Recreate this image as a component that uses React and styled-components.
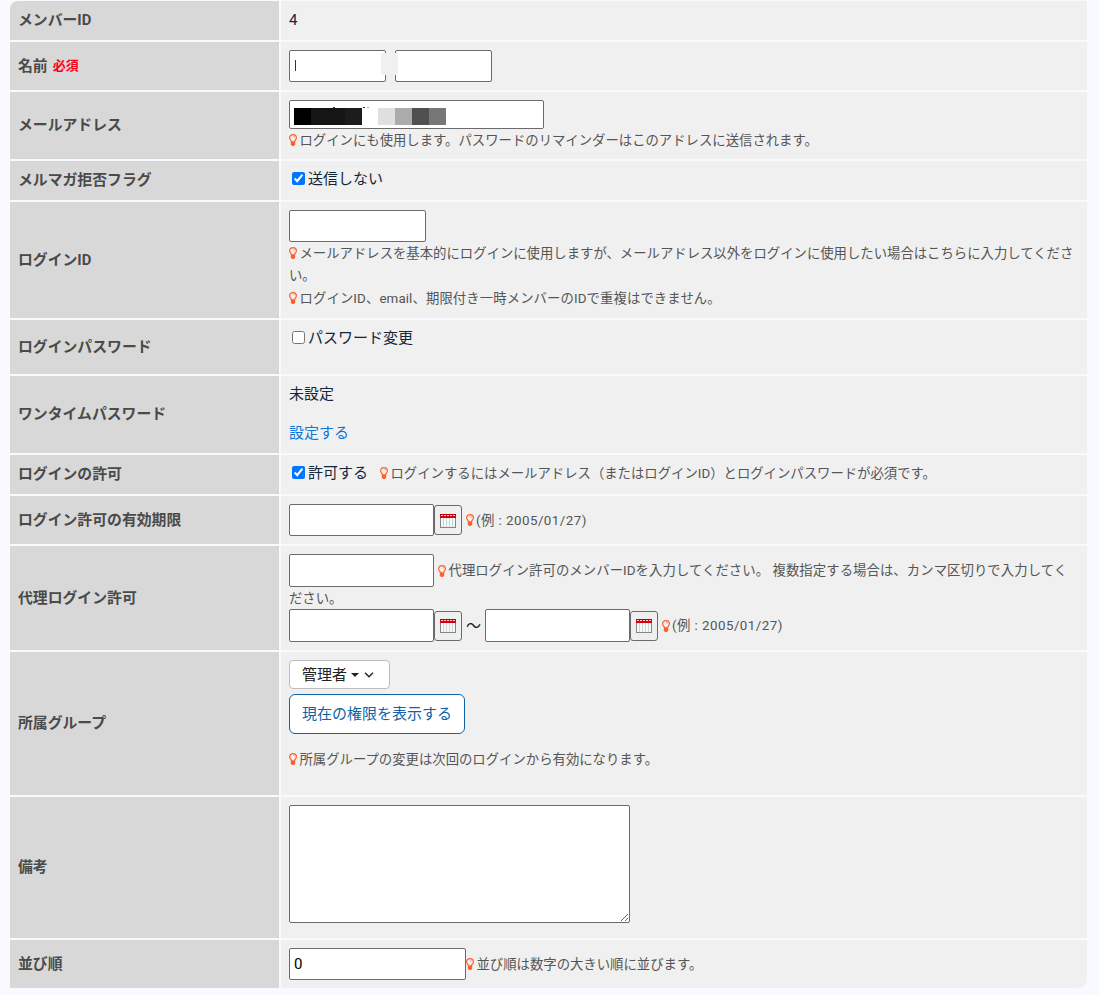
import React from "react";
import styled, { createGlobalStyle } from "styled-components";

const GlobalStyle = createGlobalStyle`
  * {
    box-sizing: border-box;
  }
  body {
    margin: 0;
    background: #f9faff;
    color: #14263a;
    font-family: Roboto, "Noto Sans CJK JP", sans-serif;
    font-size: 15px;
    overflow: hidden;
  }
`;

const Form = styled.form`
  display: flex;
  flex-direction: column;
  gap: 2px;
  width: 1077px;
  margin: 1px 0 0 10px;
  border-radius: 8px 0 8px 0;
  overflow: hidden;
`;

const RowBox = styled.div`
  display: grid;
  grid-template-columns: 269px 806px;
  gap: 2px;
  height: ${(p) => p.$height}px;
`;

const Label = styled.div`
  display: flex;
  align-items: center;
  padding: 0 8px 4px;
  background: #d8d8d8;
  color: #4a4a4a;
  font-size: 14.85px;
  font-weight: 700;
`;

const Required = styled.span`
  margin-left: 5px;
  color: #ff0019;
  font-size: 13px;
`;

const Value = styled.div`
  padding: 8px 8px 0;
  background: #f0f0f0;
`;

const Line = styled.div`
  position: relative;
  display: flex;
  align-items: center;
  height: ${(p) => p.$height || 20}px;
  margin-top: ${(p) => p.$top || 0}px;
  white-space: nowrap;
`;

const Text = styled.span`
  padding-bottom: 3px;
`;

const Input = styled.input`
  width: ${(p) => p.$width}px;
  height: ${(p) => p.$height || 32}px;
  margin: 0;
  padding: 0 4px;
  border: 1px solid #6b6b6b;
  border-radius: 2px;
  background: #fff;
  color: #000;
  font-family: inherit;
  font-size: 15px;
`;

const NameInput = styled(Input)`
  margin-right: 9px;
`;

const Caret = styled.span`
  position: absolute;
  left: 6px;
  top: 10px;
  width: 1px;
  height: 11px;
  background: #333;
`;

const Cover = styled.span`
  position: absolute;
  left: 92px;
  top: 3px;
  width: 17px;
  height: 22px;
  background: #f0f0f0;
`;

const Mosaic = styled.span`
  position: absolute;
  left: 5px;
  top: 8px;
  display: flex;
`;

const Tile = styled.span`
  width: 16.9px;
  height: 17px;
  background: ${(p) => p.$color};
`;

const Speck = styled.span`
  position: absolute;
  top: 7px;
  left: ${(p) => p.$left}px;
  width: 2px;
  height: 1px;
  background: ${(p) => p.$color || "#333"};
`;

const Check = styled.input`
  width: 13px;
  height: 13px;
  margin: 0 3px 2px;
`;

const NoteText = styled.span`
  display: inline-flex;
  align-items: center;
  margin-left: ${(p) => p.$left || 0}px;
  padding-bottom: 2px;
  color: #555;
  font-size: 13.36px;
  letter-spacing: ${(p) => p.$spacing || 0}px;
  white-space: pre;

  svg {
    flex: none;
    margin: 2px ${(p) => p.$gap ?? 2.5}px 0 0;
  }
`;

const Link = styled.a`
  padding-bottom: 3px;
  color: #0c78dc;
  text-decoration: none;
`;

const CalendarButton = styled.button`
  display: flex;
  align-items: center;
  justify-content: center;
  width: 28px;
  height: 30px;
  padding: 1px 0 0;
  border: 1px solid #6b6b6b;
  border-radius: 3px;
  background: #efefef;
`;

const Tilde = styled.span`
  width: 23px;
  padding-bottom: 3px;
  text-align: center;
`;

const GroupSelect = styled.button`
  display: flex;
  align-items: center;
  width: 101px;
  height: 29px;
  padding: 0 12px 2px;
  border: 1px solid #bdbdbd;
  border-radius: 4px;
  background: #fff;
  color: #222;
  font-family: inherit;
  font-size: 15px;

  svg {
    margin: 3px 0 0 4px;
  }
  svg + svg {
    margin-left: 5px;
  }
`;

const OutlineButton = styled.button`
  display: block;
  width: 176px;
  height: 40px;
  margin-top: 5px;
  padding: 0 0 4px;
  border: 1px solid #1062a6;
  border-radius: 6px;
  background: #fff;
  color: #1062a6;
  font-family: inherit;
  font-size: 15px;
  white-space: nowrap;
`;

const Memo = styled.textarea`
  display: block;
  width: 341px;
  height: 118px;
  border: 1px solid #6b6b6b;
  border-radius: 2px;
  background: #fff;
`;

const Bulb = () => (
  <svg width="8" height="12" viewBox="0 0 8 12" fill="none">
    <path
      d="M2.5 7.6C2.4 6.3.6 5.8.6 3.8a3.4 3.2 0 0 1 6.8 0c0 2-1.8 2.5-1.9 3.8"
      stroke="#ff5f2b"
      strokeWidth="1.2"
    />
    <path d="M4.3 2.2c.8 0 1.3.5 1.3 1.3" stroke="#ff5f2b" strokeWidth=".6" />
    <path d="M1.8 7.2h4.4v3.2L5 12H3l-1.2-1.6z" fill="#ff5f2b" />
  </svg>
);

const Calendar = () => (
  <svg width="16" height="14" viewBox="0 0 16 14" shapeRendering="crispEdges">
    <rect width="16" height="14" fill="#858585" />
    <rect width="16" height="4" fill="#d8000f" />
    <rect width="16" height="1" fill="#b0000c" />
    <path d="M1 1.5h14" stroke="#ffd5d5" strokeDasharray="2 1" />
    <rect x="1" y="4" width="14" height="9" fill="#f4fafa" />
    <path d="M3.5 4v9M6.5 4v9M9.5 4v9M12.5 4v9" stroke="#ccd4d4" />
  </svg>
);

const Note = ({ children, left, gap, spacing }) => (
  <NoteText $left={left} $gap={gap} $spacing={spacing}>
    <Bulb />
    {children}
  </NoteText>
);

const DateField = ({ height }) => (
  <>
    <Input $width={145} $height={height} type="text" />
    <CalendarButton type="button">
      <Calendar />
    </CalendarButton>
  </>
);

const DateExample = () => (
  <Note left={4} gap={2} spacing={0.45}>
    (例 : 2005/01/27)
  </Note>
);

const Row = ({ label, height, required, children }) => (
  <RowBox $height={height}>
    <Label>
      {label}
      {required && <Required>必須</Required>}
    </Label>
    <Value>{children}</Value>
  </RowBox>
);

const tiles = ["#000", "#151515", "#151515", "#1c1c1c", "#fff", "#dfdfdf", "#ababab", "#505050", "#777"];

const App = () => {
  return (
    <>
      <GlobalStyle />
      <Form>
        <Row label="メンバーID" height={39}>
          <Line $height={22}>4</Line>
        </Row>
        <Row label="名前" height={48} required>
          <Line $height={32}>
            <NameInput $width={97} />
            <NameInput $width={97} />
            <Caret />
            <Cover />
          </Line>
        </Row>
        <Row label="メールアドレス" height={67}>
          <Line $height={29}>
            <Input $width={255} $height={29} />
            <Mosaic>
              {tiles.map((color, i) => (
                <Tile key={i} $color={color} />
              ))}
            </Mosaic>
            <Speck $left={44} />
            <Speck $left={74} />
            <Speck $left={78} $color="#aaa" />
          </Line>
          <Line $height={22}>
            <Note>ログインにも使用します。パスワードのリマインダーはこのアドレスに送信されます。</Note>
          </Line>
        </Row>
        <Row label="メルマガ拒否フラグ" height={39}>
          <Line>
            <Check type="checkbox" defaultChecked />
            <Text>送信しない</Text>
          </Line>
        </Row>
        <Row label="ログインID" height={116}>
          <Line $height={32}>
            <Input $width={137} />
          </Line>
          <Line $height={22.5}>
            <Note>
              メールアドレスを基本的にログインに使用しますが、メールアドレス以外をログインに使用したい場合はこちらに入力してくださ
            </Note>
          </Line>
          <Line $height={22.5}>
            <NoteText>い。</NoteText>
          </Line>
          <Line $height={22.5}>
            <Note spacing={0.1}>ログインID、email、期限付き一時メンバーのIDで重複はできません。</Note>
          </Line>
        </Row>
        <Row label="ログインパスワード" height={54}>
          <Line>
            <Check type="checkbox" />
            <Text>パスワード変更</Text>
          </Line>
        </Row>
        <Row label="ワンタイムパスワード" height={77}>
          <Line>
            <Text>未設定</Text>
          </Line>
          <Line $top={19}>
            <Link>設定する</Link>
          </Line>
        </Row>
        <Row label="ログインの許可" height={39}>
          <Line>
            <Check type="checkbox" defaultChecked />
            <Text>許可する</Text>
            <Note left={12}>ログインするにはメールアドレス（またはログインID）とログインパスワードが必須です。</Note>
          </Line>
        </Row>
        <Row label="ログイン許可の有効期限" height={48}>
          <Line $height={32}>
            <DateField />
            <DateExample />
          </Line>
        </Row>
        <Row label="代理ログイン許可" height={104}>
          <Line $height={33}>
            <Input $width={145} $height={33} />
            <Note left={4} spacing={0.07}>
              代理ログイン許可のメンバーIDを入力してください。 複数指定する場合は、カンマ区切りで入力してく
            </Note>
          </Line>
          <Line $height={22}>
            <NoteText>ださい。</NoteText>
          </Line>
          <Line $height={33}>
            <DateField height={33} />
            <Tilde>～</Tilde>
            <DateField height={33} />
            <DateExample />
          </Line>
        </Row>
        <Row label="所属グループ" height={143}>
          <GroupSelect type="button">
            管理者
            <svg width="8" height="4" viewBox="0 0 8 4">
              <path d="M0 0h8L4 4z" fill="#222" />
            </svg>
            <svg width="10" height="6" viewBox="0 0 10 6" fill="none">
              <path d="M1 .8l4 4 4-4" stroke="#222" strokeWidth="1.4" />
            </svg>
          </GroupSelect>
          <OutlineButton type="button">現在の権限を表示する</OutlineButton>
          <Line $height={22} $top={14}>
            <Note>所属グループの変更は次回のログインから有効になります。</Note>
          </Line>
        </Row>
        <Row label="備考" height={141}>
          <Memo />
        </Row>
        <Row label="並び順" height={48}>
          <Line $height={32}>
            <Input $width={177} defaultValue="0" />
            <Note>並び順は数字の大きい順に並びます。</Note>
          </Line>
        </Row>
      </Form>
    </>
  );
};

export default App;
